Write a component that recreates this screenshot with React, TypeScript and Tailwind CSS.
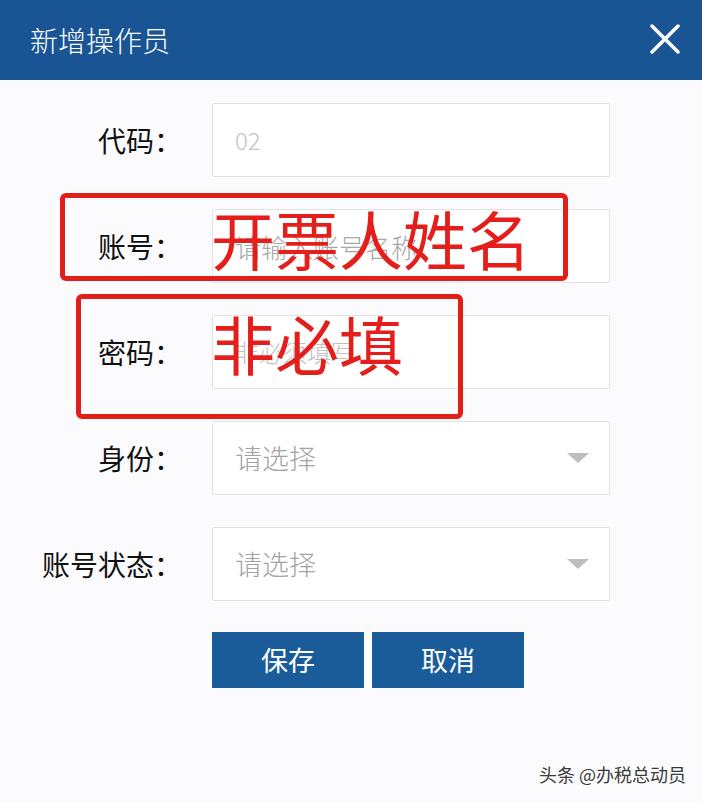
import { ReactNode } from "react";

const font = { fontFamily: '"Noto Sans CJK SC", "Noto Sans", sans-serif' };

const Row = ({ label, children }: { label: string; children: ReactNode }) => {
  return (
    <div className="flex items-center h-[74px]">
      <div className="w-[212px] pr-[30px] text-right text-[28px] leading-none text-[#111]">
        {label}
      </div>
      <div className="w-[398px] h-full bg-white border border-[#e2e2e6] rounded-[2px] flex items-center pl-[22px] pr-[20px]">
        {children}
      </div>
    </div>
  );
};

const Select = () => (
  <>
    <span className="flex-1 text-[27px] text-[#a3a3a3] font-light">请选择</span>
    <span className="w-0 h-0 border-l-[11px] border-r-[11px] border-t-[10px] border-l-transparent border-r-transparent border-t-[#bdbdc0]" />
  </>
);

export default function App() {
  return (
    <div className="w-[702px] h-[802px] bg-[#fbfbfd] relative overflow-hidden" style={font}>
      <div className="h-[80px] bg-[#195594] flex items-center justify-between pl-[30px] pr-[22px]">
        <h1 className="text-white text-[28px] font-light">新增操作员</h1>
        <svg width="30" height="30" viewBox="0 0 30 30" className="mt-[-2px]">
          <path d="M2 2 L28 28 M28 2 L2 28" stroke="white" strokeWidth="3.5" strokeLinecap="round" />
        </svg>
      </div>

      <div className="pt-[23px] flex flex-col gap-[32px]">
        <Row label="代码：">
          <span className="text-[24px] text-[#c4c4c8] font-light">02</span>
        </Row>
        <Row label="账号：">
          <span className="text-[26px] text-[#a8a8a8] font-light">请输入账号名称</span>
        </Row>
        <Row label="密码：">
          <span className="text-[24px] text-[#c0c0c0] font-light">非必须填写</span>
        </Row>
        <Row label="身份：">
          <Select />
        </Row>
        <Row label="账号状态：">
          <Select />
        </Row>
      </div>

      <div className="flex gap-[8px] pl-[212px] mt-[31px]">
        <button className="w-[152px] h-[56px] bg-[#1a5c99] text-white text-[27px]">保存</button>
        <button className="w-[152px] h-[56px] bg-[#1a5c99] text-white text-[27px]">取消</button>
      </div>

      {/* red annotations */}
      <div className="absolute left-[60px] top-[193px] w-[508px] h-[88px] border-[5px] border-[#e01e1a] rounded-[6px]" />
      <div className="absolute left-[211px] top-[205px] text-[64px] leading-none text-[#e41f1b] whitespace-nowrap">
        开票人姓名
      </div>
      <div className="absolute left-[76px] top-[294px] w-[387px] h-[125px] border-[5px] border-[#e01e1a] rounded-[6px]" />
      <div className="absolute left-[211px] top-[310px] text-[64px] leading-none text-[#e41f1b] whitespace-nowrap">
        非必填
      </div>

      <div className="absolute right-[16px] bottom-[14px] text-[18px] text-[#3a3a3a] [text-shadow:1px_1px_1px_#ffffff,-1px_-1px_1px_#ffffff]">
        头条 @办税总动员
      </div>
    </div>
  );
}
